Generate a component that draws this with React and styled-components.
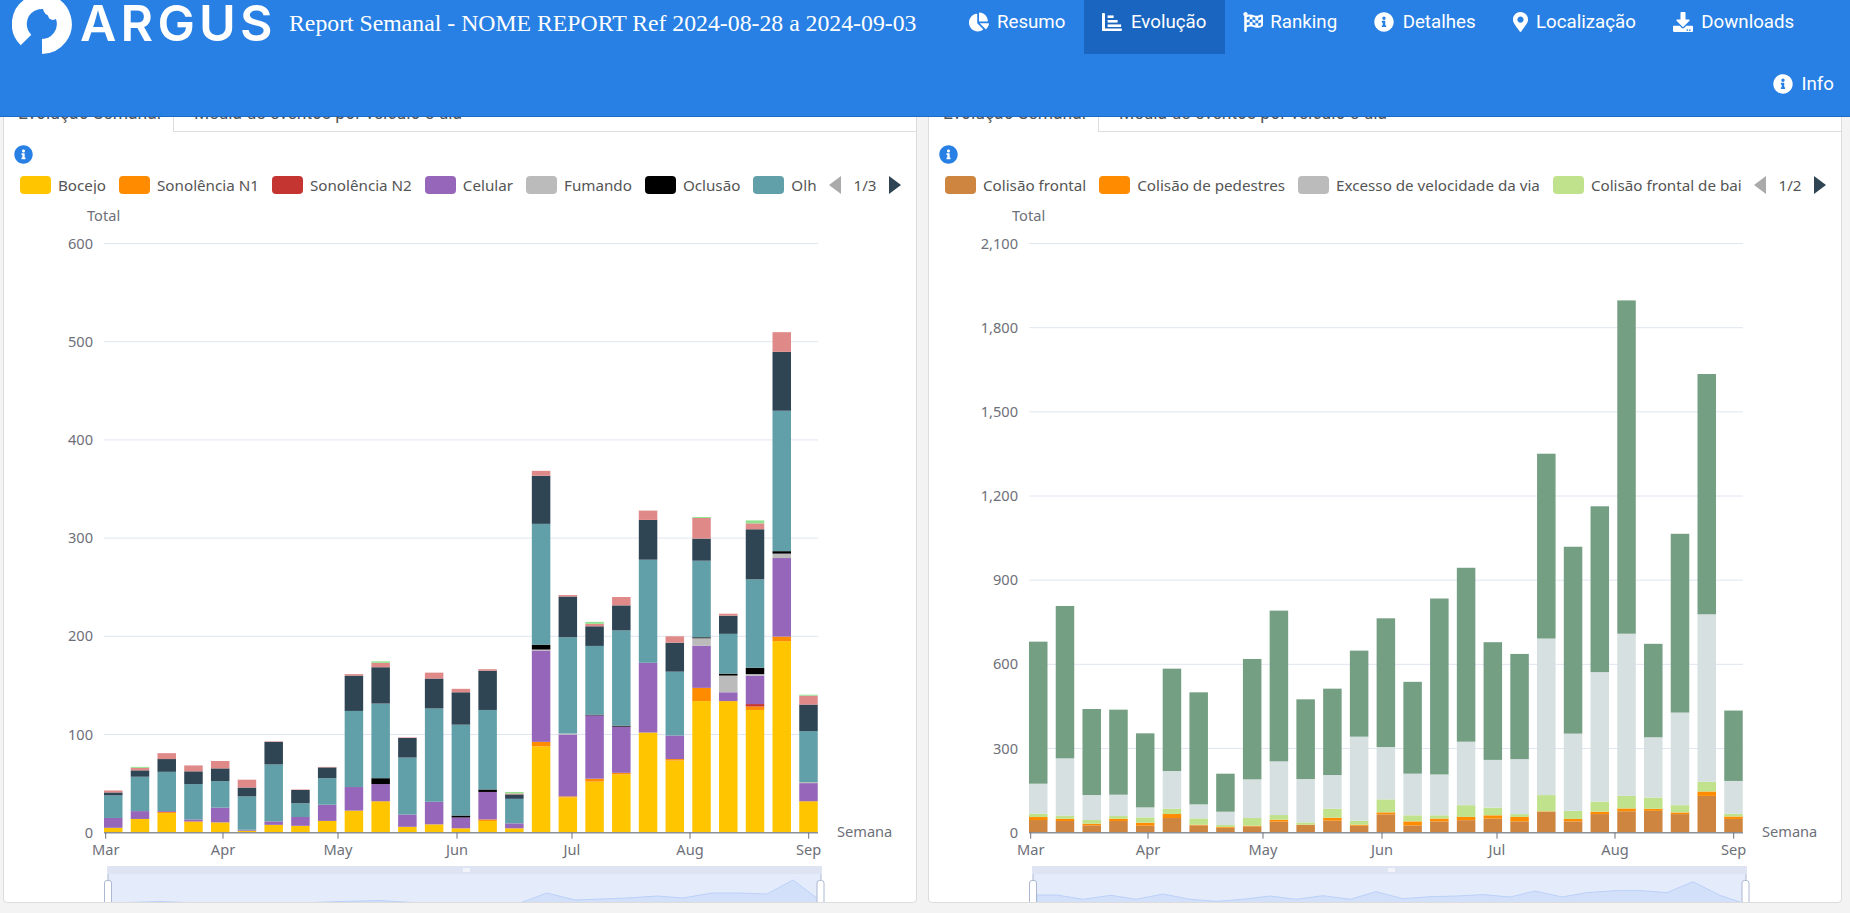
import React from "react";
import styled, { createGlobalStyle } from "styled-components";
import { FaChartPie, FaFlagCheckered, FaInfoCircle, FaMapMarkerAlt, FaDownload } from "react-icons/fa";

const Global = createGlobalStyle`
  html, body { margin: 0; padding: 0; background: #f3f3f3; height: 100%; overflow: hidden; }
  * { box-sizing: border-box; }
`;

const Page = styled.div`
  position: relative;
  width: 1850px;
  height: 913px;
  overflow: hidden;
`;
const Header = styled.header`
  position: absolute;
  inset: 0 0 auto 0;
  z-index: 5;
  height: 117px;
  display: flex;
  align-items: flex-start;
  background: #2880e4;
  border-bottom: 1px solid #1c6ac4;
  color: #fff;
`;
const Brand = styled.div`
  display: flex;
  align-items: flex-start;
  flex: none;
  width: 289px;
  padding-left: 12px;
`;
const Wordmark = styled.span`
  margin-left: 8px;
  font-family: Inter, sans-serif;
  font-weight: 600;
  font-size: 50px;
  line-height: 46px;
  letter-spacing: 4.2px;
`;
const ReportTitle = styled.h1`
  flex: none;
  width: 661px;
  margin: 0;
  font-family: "Liberation Serif", serif;
  font-weight: 400;
  font-size: 23.76px;
  line-height: 46px;
  white-space: nowrap;
`;
const Nav = styled.nav`
  flex: 1;
  display: flex;
  flex-wrap: wrap;
  align-content: flex-start;
`;
const NavItem = styled.a`
  display: flex;
  align-items: center;
  gap: ${(p) => (p.$tight ? "7px" : "8.5px")};
  height: ${(p) => (p.$end ? "60px" : "54px")};
  padding: 0 ${(p) => (p.$end ? "16px" : "18.5px")} ${(p) => (p.$end ? "0" : "10px")} 18.5px;
  margin-left: ${(p) => (p.$end ? "auto" : "0")};
  background: ${(p) => (p.$active ? "#1a65bf" : "transparent")};
  font-family: Roboto, sans-serif;
  font-size: 18.7px;
  color: #fff;
  svg { font-size: 20px; flex: none; }
`;
const PinIcon = styled(FaMapMarkerAlt)`
  width: 15px;
`;
const Panels = styled.main`
  display: grid;
  grid-template-columns: 914px 914px;
  gap: 11px;
  padding: 92px 0 0 3px;
`;
const Card = styled.section`
  height: 811px;
  overflow: hidden;
  background: #fff;
  border: 1px solid #dcdcdc;
  border-radius: 4px;
`;
const TabBar = styled.div`
  display: flex;
  height: 39px;
  border-bottom: 1px solid #ddd;
  font-family: Roboto, sans-serif;
  font-size: 17.5px;
  color: #555;
`;
const Tab = styled.div`
  display: flex;
  align-items: center;
  height: 39px;
  padding: 0 ${(p) => (p.$active ? "12px" : "0")} 0 ${(p) => (p.$active ? "14px" : "20px")};
  white-space: nowrap;
  ${(p) => p.$active && "background:#fff;border-right:1px solid #ddd;"}
`;
const Body = styled.div`
  padding: 13px 0 0 0;
`;
const InfoBadge = styled.div`
  display: flex;
  height: 19px;
  margin: 0 0 12px 10px;
  color: #2880e4;
  font-size: 19px;
`;
const LegendRow = styled.div`
  display: flex;
  align-items: center;
  height: 18px;
  padding-left: 16px;
  margin-bottom: 11px;
`;
const LegendViewport = styled.div`
  display: flex;
  gap: 13px;
  width: 796px;
  overflow: hidden;
`;
const LegendItem = styled.div`
  display: flex;
  flex: none;
  align-items: center;
  gap: 7px;
  height: 18px;
  font-family: "Noto Sans", sans-serif;
  font-size: 15.2px;
  color: #555;
`;
const Swatch = styled.i`
  display: block;
  width: 31px;
  height: 18px;
  border-radius: 4px;
  background: ${(p) => p.$color};
`;
const Pager = styled.div`
  display: flex;
  align-items: center;
  margin-left: 13px;
  font-family: "Noto Sans", sans-serif;
  font-size: 15.2px;
  color: #555;
`;
const PagerLabel = styled.span`
  width: 48px;
  text-align: center;
`;
const Arrow = styled.i`
  display: block;
  width: 0;
  height: 0;
  border-top: 9px solid transparent;
  border-bottom: 9px solid transparent;
  ${(p) => (p.$left ? "border-right: 12px solid #aaa;" : "border-left: 12px solid #2f4554;")}
`;
const ChartSvg = styled.svg`
  display: block;
  width: 912px;
  height: 698px;
  text {
    font-family: "Noto Sans", sans-serif;
    font-size: 14.6px;
    fill: #6e7079;
  }
`;

const LEFT_COLORS = ["#ffc600", "#ff8c00", "#c43532", "#9566ba", "#bbbbbb", "#000000", "#61a0a8", "#2f4554", "#e08989", "#91e28f"];
const leftData = [
  [5, 0, 0, 10, 0, 0, 23, 3, 2, 0],
  [14, 0, 0, 8, 0, 0, 35, 6.5, 2.5, 1],
  [20, 1, 0, 1, 0, 0, 40, 13, 6, 0],
  [11, 0.5, 0, 2, 0, 0, 36, 13, 6, 0],
  [10.5, 0, 0, 15, 0, 0, 27, 13, 7.5, 0],
  [2, 0, 0, 1, 0, 0, 34, 9, 8, 0],
  [8, 0, 0, 3.5, 0, 0, 58, 23, 0.5, 0],
  [7, 0, 0, 9, 0, 0, 14, 13.5, 0.5, 0],
  [12, 0, 0, 16.5, 0, 0, 27, 11, 0.5, 0],
  [22.5, 0, 0, 24, 0, 0, 77.5, 36, 1.5, 0],
  [32, 0, 0, 17.5, 0, 6, 76, 37, 4.5, 1.5],
  [6, 0, 0, 12.5, 0, 0, 58, 20, 0.5, 0],
  [8.5, 0, 0, 23, 0, 0, 95, 30.5, 6, 0],
  [4.5, 0, 0, 11, 0, 2, 92.5, 33, 3.5, 0],
  [12, 1.5, 0, 28, 0, 2.5, 81, 40, 1.5, 0],
  [4.5, 0, 0, 5, 0, 0, 25, 4.5, 1, 1.5],
  [88, 4.5, 0, 93, 1, 5, 123, 49, 5, 0],
  [36, 1, 0, 63, 1, 0, 98, 41.5, 1.5, 0],
  [52, 3, 0, 64.5, 0, 0.7, 70, 20, 2.5, 2],
  [59.5, 1.5, 0, 47, 0, 1, 97, 25.5, 8.5, 0],
  [102, 0, 0, 71, 0, 0, 105, 40.5, 9.5, 0],
  [73.5, 1.5, 0, 24, 0, 0, 65, 29.5, 6.5, 0],
  [134, 13.5, 0, 43, 7.5, 1, 78, 22.5, 21, 1],
  [134, 0, 0, 9, 17, 2, 40.5, 18.5, 2, 0],
  [125, 3.5, 2.5, 29, 1.5, 6.5, 90, 51, 6, 3],
  [195, 4.7, 0, 80, 4.5, 2.5, 143, 60, 20, 0],
  [32, 0, 0, 18.5, 1, 0, 52, 27, 9, 1],
];
// Right chart: cumulative bar levels in events.
const RIGHT_COLORS = ["#cd853f", "#ff8c00", "#c1e28c", "#d6e0e0", "#749f83"];
const e1 = (a) => a.map((h) => h / 3 / 0.2805);
const e2 = (a) => a.map((h) => h / 2.473 / 0.2805);
const rightLevels = [
  ...[
    [38, 47, 57, 147, 573], [35, 42, 51, 223, 680], [22, 27, 38, 113, 371], [35, 42, 50, 114, 369],
    [21, 30, 46, 76, 298], [44, 56, 72, 185, 492], [22, 24, 43, 85, 421], [15, 17, 23, 63, 177],
    [19, 21, 44, 160, 521], [33, 39, 53, 214, 666], [23, 24, 31, 161, 400], [36, 45, 72, 173, 432],
    [21, 24, 36, 288, 546], [55, 61, 100, 257, 643],
  ].map(e1),
  ...[
    [18, 28, 43, 146, 373], [28, 35, 43, 144, 579], [31, 39, 68, 225, 655], [35, 43, 62, 180, 471],
    [28, 39, 46, 182, 442], [52, 53, 93, 480, 937], [28, 34, 54, 245, 707], [46, 52, 77, 397, 807],
    [53, 60, 91, 492, 1316], [54, 59, 87, 236, 467], [46, 50, 68, 297, 739], [91, 102, 126, 540, 1134],
    [34, 40, 47, 128, 302],
  ].map(e2),
];
const rightData = rightLevels.map((l) => l.map((v, i) => v - (l[i - 1] || 0)));

const MONTHS = [["Mar", 105.7], ["Apr", 223], ["May", 338], ["Jun", 457], ["Jul", 572], ["Aug", 690], ["Sep", 808.7]];
const PLOT = { left: 104, right: 818, base: 832.7, top: 243.5, step: 26.74, bar: 18.5 };

const leftMini = [[112, 903], [160, 901.5], [200, 903], [300, 903], [340, 901.5], [380, 900.5], [420, 903], [520, 903], [547, 893], [575, 900], [627, 898], [657, 896], [683, 898], [712, 893], [740, 893], [767, 894], [793, 880], [818, 899]];
const rightMini = [[112, 895], [132, 895], [158, 899.3], [186, 895.3], [211, 899.3], [238, 894], [265, 899.3], [291, 901.3], [318, 899.3], [345, 896], [371, 899.3], [398, 895.7], [425, 899.3], [451, 891.7], [478, 898.7], [505, 896.7], [532, 896], [558, 894.6], [585, 897], [610, 891], [637, 897], [662, 892.6], [692, 890.6], [715, 890.6], [742, 892.6], [768, 881.7], [795, 895.4], [817, 902.7]];

function Chart({ data, colors, max, ticks, mini }) {
  const { left, right, base, top, step, bar } = PLOT;
  const k = (base - top) / max;
  const area = `M${left + 8} 910 ` + mini.map((p) => `L${p[0]} ${p[1]}`).join(" ") + ` L${mini[mini.length - 1][0]} 910 Z`;
  return (
    <ChartSvg viewBox="4 205 912 698">
      <text x="87" y="221">Total</text>
      {ticks.map((t) => {
        const y = base - t * k;
        return (
          <g key={t}>
            {t > 0 && <line x1={left} x2={right} y1={y} y2={y} stroke="#e0e6f1" strokeWidth="1" />}
            <text x="93" y={y + 5} textAnchor="end">{t.toLocaleString("en-US")}</text>
          </g>
        );
      })}
      {data.map((segs, i) => {
        let acc = 0;
        return (
          <g key={i}>
            {segs.map((v, j) => {
              if (!v) return null;
              const h = v * k;
              acc += h;
              return <rect key={j} x={left + i * step} y={base - acc} width={bar} height={h} fill={colors[j]} />;
            })}
          </g>
        );
      })}
      <line x1={left} x2={right} y1={base} y2={base} stroke="#8c8f98" strokeWidth="1.5" />
      {MONTHS.map(([m, x]) => (
        <g key={m}>
          <line x1={x} x2={x} y1={base} y2={base + 6} stroke="#6e7079" strokeWidth="1" />
          <text x={x} y="855" textAnchor="middle">{m}</text>
        </g>
      ))}
      <text x="837" y="837">Semana</text>
      <rect x="107" y="866" width="715" height="8" rx="1" fill="#dfe4f2" />
      <rect x="108" y="874" width="713" height="30" fill="#e4ecfc" />
      <path d={area} fill="#d2e0fa" stroke="#bcd0f8" strokeWidth="1" />
      <rect x="463" y="868" width="7" height="4" fill="#f2f4fa" />
      <line x1="108" x2="108" y1="874" y2="881" stroke="#acb8d1" />
      <line x1="821" x2="821" y1="874" y2="881" stroke="#acb8d1" />
      <rect x="104.5" y="880.5" width="7" height="30" rx="2.5" fill="#fff" stroke="#acb8d1" />
      <rect x="817" y="880.5" width="7" height="30" rx="2.5" fill="#fff" stroke="#acb8d1" />
    </ChartSvg>
  );
}

function Logo() {
  return (
    <svg width="60" height="54" viewBox="0 0 60 54" fill="none">
      <path d="M30 46.5A22.5 22.5 0 1 0 14 40" stroke="#fff" strokeWidth="15" />
      <circle cx="39" cy="8" r="8" fill="#fff" />
      <circle cx="41" cy="15" r="5" fill="#fff" />
    </svg>
  );
}

function EvolutionIcon() {
  return (
    <svg width="20" height="18" viewBox="0 0 20 18" fill="#fff">
      <rect x="0" y="0" width="3" height="18" rx="1" />
      <rect x="0" y="15.6" width="20" height="2.4" rx="1" />
      <rect x="5.6" y="2.4" width="6" height="2.6" />
      <rect x="5.6" y="7" width="10" height="2.6" />
      <rect x="5.6" y="11.4" width="13.5" height="2.6" />
    </svg>
  );
}

function Panel({ legend, page, data, colors, max, ticks, mini }) {
  return (
    <Card>
      <TabBar>
        <Tab $active>Evolução Semanal</Tab>
        <Tab>Média de eventos por veículo e dia</Tab>
      </TabBar>
      <Body>
        <InfoBadge><FaInfoCircle /></InfoBadge>
        <LegendRow>
          <LegendViewport>
            {legend.map(([name, color]) => (
              <LegendItem key={name}><Swatch $color={color} />{name}</LegendItem>
            ))}
          </LegendViewport>
          <Pager>
            <Arrow $left />
            <PagerLabel>{page}</PagerLabel>
            <Arrow />
          </Pager>
        </LegendRow>
        <Chart data={data} colors={colors} max={max} ticks={ticks} mini={mini} />
      </Body>
    </Card>
  );
}

const LEFT_LEGEND = [["Bocejo", "#ffc600"], ["Sonolência N1", "#ff8c00"], ["Sonolência N2", "#c43532"], ["Celular", "#9566ba"], ["Fumando", "#bbbbbb"], ["Oclusão", "#000000"], ["Olhos fechados", "#61a0a8"]];
const RIGHT_LEGEND = [["Colisão frontal", "#cd853f"], ["Colisão de pedestres", "#ff8c00"], ["Excesso de velocidade da via", "#bbbbbb"], ["Colisão frontal de baixa velocidade", "#c1e28c"]];

export default function App() {
  return (
    <Page>
      <Global />
      <Header>
        <Brand>
          <Logo />
          <Wordmark>ARGUS</Wordmark>
        </Brand>
        <ReportTitle>Report Semanal - NOME REPORT Ref 2024-08-28 a 2024-09-03</ReportTitle>
        <Nav>
          <NavItem><FaChartPie />Resumo</NavItem>
          <NavItem $active><EvolutionIcon />Evolução</NavItem>
          <NavItem $tight><FaFlagCheckered />Ranking</NavItem>
          <NavItem><FaInfoCircle />Detalhes</NavItem>
          <NavItem><PinIcon />Localização</NavItem>
          <NavItem><FaDownload />Downloads</NavItem>
          <NavItem $end><FaInfoCircle />Info</NavItem>
        </Nav>
      </Header>
      <Panels>
        <Panel legend={LEFT_LEGEND} page="1/3" data={leftData} colors={LEFT_COLORS} max={600} ticks={[0, 100, 200, 300, 400, 500, 600]} mini={leftMini} />
        <Panel legend={RIGHT_LEGEND} page="1/2" data={rightData} colors={RIGHT_COLORS} max={2100} ticks={[0, 300, 600, 900, 1200, 1500, 1800, 2100]} mini={rightMini} />
      </Panels>
    </Page>
  );
}
